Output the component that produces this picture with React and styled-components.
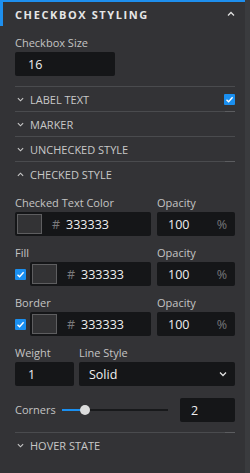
import React from "react";
import styled, { createGlobalStyle } from "styled-components";

const Global = createGlobalStyle`
  html, body { margin: 0; padding: 0; background: #333336; }
  body { font-family: "Open Sans", "Noto Sans", sans-serif; width: 250px; height: 473px; overflow: hidden; }
  * { box-sizing: border-box; }
`;

const Shell = styled.div`
  display: flex;
  width: 250px;
  height: 473px;
  background: #333336;
`;

const Panel = styled.div`
  width: 245px;
  display: flex;
  flex-direction: column;
`;

const Scroll = styled.div`
  width: 5px;
  background: #3a3b3e;
`;

const Header = styled.div`
  height: 26px;
  border-top: 2px solid #1e8fee;
  border-left: 3px solid #1e8fee;
  display: flex;
  align-items: center;
  justify-content: space-between;
  padding: 0 10px 0 12px;
  color: #e6e6e6;
  font-size: 11px;
  font-weight: 700;
  letter-spacing: 1.6px;
`;

const Body = styled.div`
  padding: 0 10px 0 15px;
  display: flex;
  flex-direction: column;
`;

const Group = styled.div`
  margin-top: ${(p) => p.$mt ?? 10}px;
  display: flex;
  flex-direction: column;
`;

const Label = styled.div`
  height: 14px;
  line-height: 14px;
  font-size: 11px;
  color: #c4c4c4;
  margin-bottom: 2px;
  white-space: nowrap;
`;

const Field = styled.div`
  height: 24px;
  width: ${(p) => (p.$w ? p.$w + "px" : "auto")};
  flex: ${(p) => (p.$grow ? 1 : "none")};
  background: #151618;
  border-radius: 2px;
  display: flex;
  align-items: center;
  padding-left: ${(p) => p.$pl ?? 12}px;
  padding-right: 8px;
  color: #f0f0f0;
  font-size: 12.5px;
`;

const Row = styled.div`
  display: flex;
  gap: ${(p) => p.$gap ?? 6}px;
  align-items: ${(p) => p.$align || "stretch"};
`;

const Col = styled.div`
  display: flex;
  flex-direction: column;
  width: ${(p) => (p.$w ? p.$w + "px" : "auto")};
  flex: ${(p) => (p.$grow ? 1 : "none")};
`;

const Section = styled.div`
  position: relative;
  height: 25px;
  border-top: 1px solid #4a4b4e;
  display: flex;
  align-items: center;
  gap: 6px;
  padding-left: 2px;
  color: #c8c8c8;
  font-size: 11px;
  text-transform: uppercase;
  margin-top: ${(p) => p.$mt ?? 0}px;
  &::after {
    content: "";
    display: ${(p) => (p.$mark ? "block" : "none")};
    position: absolute;
    right: 0;
    top: -1px;
    width: 10px;
    height: 1px;
    background: #5c5d60;
  }
`;

const SectionTitle = styled.span`
  flex: 1;
`;

const Box = styled.div`
  width: 11px;
  height: 11px;
  background: #1a8ff0;
  border-radius: 1px;
  display: flex;
  align-items: center;
  justify-content: center;
  flex: none;
`;

const Swatch = styled.div`
  width: 25px;
  height: 20px;
  background: #333335;
  border: 1px solid #5e5e60;
  margin-right: 10px;
  flex: none;
`;

const Hash = styled.span`
  color: #7a7a7c;
  margin-right: 6px;
`;

const Value = styled.span`
  flex: 1;
`;

const Unit = styled.span`
  color: #77787a;
`;

const SliderTrack = styled.div`
  position: relative;
  width: 106px;
  height: 2px;
  background: #18191b;
  margin-left: 6px;
`;

const SliderFill = styled.div`
  position: absolute;
  left: 0;
  top: 0;
  height: 2px;
  background: #1a8ff0;
`;

const Thumb = styled.div`
  position: absolute;
  top: -4px;
  width: 10px;
  height: 10px;
  border-radius: 50%;
  background: #dcdcdc;
`;

const Spacer = styled.div`
  flex: 1;
`;

const Chevron = ({ up, size = 7, color = "#c8c8c8" }) => (
  <svg width={size} height={size} viewBox="0 0 8 8" style={{ flex: "none" }}>
    <path
      d={up ? "M1 5.5 L4 2.5 L7 5.5" : "M1 2.5 L4 5.5 L7 2.5"}
      fill="none"
      stroke={color}
      strokeWidth="1.3"
    />
  </svg>
);

const Check = () => (
  <Box>
    <svg width="9" height="9" viewBox="0 0 9 9">
      <path d="M1.5 4.8 L3.6 6.8 L7.6 2.2" fill="none" stroke="#fff" strokeWidth="1.4" />
    </svg>
  </Box>
);

const ColorField = ({ checkbox }) => (
  <Row $gap={4} $align="center">
    {checkbox && <Check />}
    <Field $grow $pl={2}>
      <Swatch />
      <Hash>#</Hash>
      <Value>333333</Value>
    </Field>
  </Row>
);

const Opacity = () => (
  <Field $w={78} $pl={11}>
    <Value>100</Value>
    <Unit>%</Unit>
  </Field>
);

const ColorGroup = ({ label, checkbox }) => (
  <Group>
    <Row $gap={6}>
      <Col $grow>
        <Label>{label}</Label>
        <ColorField checkbox={checkbox} />
      </Col>
      <Col $w={78}>
        <Label>Opacity</Label>
        <Opacity />
      </Col>
    </Row>
  </Group>
);

export default function App() {
  return (
    <>
      <Global />
      <Shell>
        <Panel>
          <Header>
            <span>CHECKBOX STYLING</span>
            <Chevron up size={8} color="#e0e0e0" />
          </Header>
          <Body>
            <Group>
              <Label>Checkbox Size</Label>
              <Field $w={100} $pl={13}>16</Field>
            </Group>
            <Section $mt={10}>
              <Chevron />
              <SectionTitle>Label Text</SectionTitle>
              <Check />
            </Section>
            <Section $mark>
              <Chevron />
              <SectionTitle>Marker</SectionTitle>
            </Section>
            <Section>
              <Chevron />
              <SectionTitle>Unchecked Style</SectionTitle>
            </Section>
            <Section $mark>
              <Chevron up />
              <SectionTitle>Checked Style</SectionTitle>
            </Section>
            <ColorGroup label="Checked Text Color" />
            <ColorGroup label="Fill" checkbox />
            <ColorGroup label="Border" checkbox />
            <Group>
              <Row $gap={5}>
                <Col $w={59}>
                  <Label>Weight</Label>
                  <Field $pl={13}>1</Field>
                </Col>
                <Col $grow>
                  <Label>Line Style</Label>
                  <Field $pl={10}>
                    <Value>Solid</Value>
                    <Chevron size={8} color="#e0e0e0" />
                  </Field>
                </Col>
              </Row>
            </Group>
            <Group $mt={12}>
              <Row $align="center" $gap={0}>
                <Label as="span" style={{ marginBottom: 0 }}>Corners</Label>
                <SliderTrack>
                  <SliderFill style={{ width: "23px" }} />
                  <Thumb style={{ left: "18px" }} />
                </SliderTrack>
                <Spacer />
                <Field $w={55} $pl={11}>2</Field>
              </Row>
            </Group>
            <Section $mt={10} $mark>
              <Chevron />
              <SectionTitle>Hover State</SectionTitle>
            </Section>
          </Body>
        </Panel>
        <Scroll />
      </Shell>
    </>
  );
}
